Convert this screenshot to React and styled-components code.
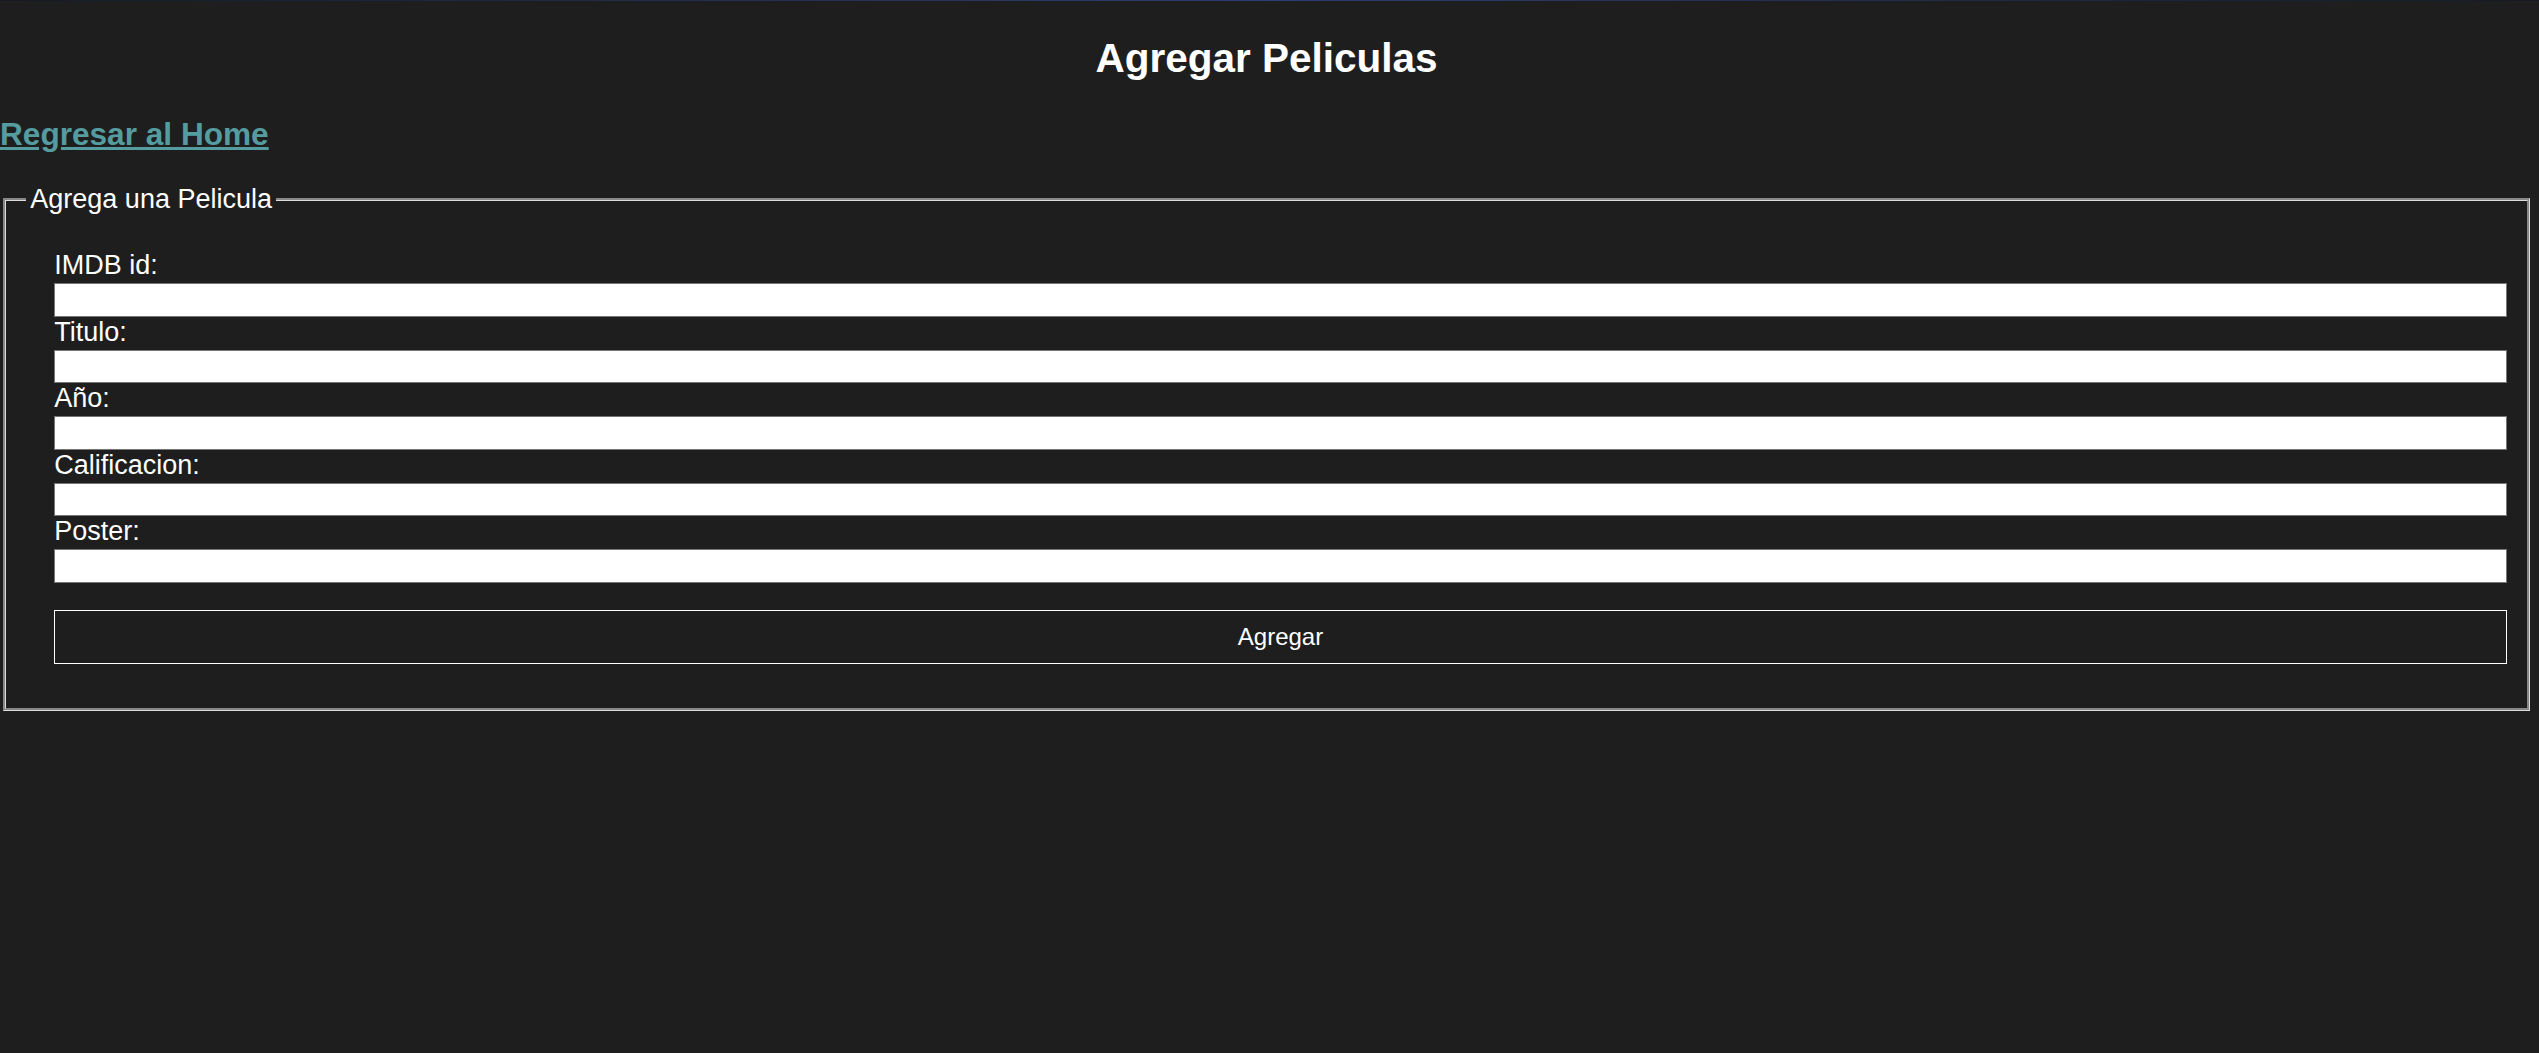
import React from 'react';
import styled, { createGlobalStyle } from 'styled-components';

const GlobalStyle = createGlobalStyle`
  html, body {
    margin: 0;
    padding: 0;
    background-color: #1e1e1e;
    font-family: "Liberation Sans", Arial, sans-serif;
    color: #fff;
  }
`;

const Page = styled.div`
  min-height: 100vh;
  padding-right: 6px;
  background-color: #1e1e1e;
`;

const TopLine = styled.div`
  height: 1px;
  margin-right: -6px;
  background: linear-gradient(90deg, #161a26 0%, #2c3d70 50%, #161a26 100%);
`;

const Title = styled.h2`
  margin: 34px 0 34.5px;
  font-size: 40.5px;
  line-height: 46px;
  font-weight: bold;
  text-align: center;
  color: #fff;
`;

const BackLink = styled.h3`
  margin: 0 0 32.5px;
  font-size: 31.6px;
  line-height: 36px;
  font-weight: bold;

  & > a {
    color: #559ca0;
    text-decoration: underline;
  }
`;

const FormBox = styled.fieldset`
  margin: 0 3.3px;
  padding: 9px 20px 16.7px;
  border: 3px groove #dcdcdc;
  min-width: 0;
`;

const Legend = styled.legend`
  padding: 0 4px;
  font-size: 27px;
  line-height: 30.7px;
  color: #fff;
`;

const Form = styled.form`
  padding: 26.5px 0 28px 28px;
  display: flex;
  flex-direction: column;
`;

const Label = styled.label`
  display: block;
  font-size: 27px;
  line-height: 31px;
  margin-bottom: 2px;
  color: #fff;
`;

const Input = styled.input`
  display: block;
  width: 100%;
  height: 33.5px;
  box-sizing: border-box;
  margin: 0;
  padding: 0 4px;
  border: 1.5px solid #767676;
  background-color: #fff;
  font-family: "Liberation Sans", Arial, sans-serif;
  font-size: 22px;
`;

const SubmitButton = styled.button`
  margin-top: 27px;
  width: 100%;
  height: 54px;
  box-sizing: border-box;
  border: 1.5px solid #fff;
  background-color: transparent;
  color: #fff;
  font-family: "Liberation Sans", Arial, sans-serif;
  font-size: 24px;
  cursor: pointer;
`;

const fields = [
  { id: 'imdbId', label: 'IMDB id:' },
  { id: 'titulo', label: 'Titulo:' },
  { id: 'anio', label: 'Año:' },
  { id: 'calificacion', label: 'Calificacion:' },
  { id: 'poster', label: 'Poster:' },
];

export default function App() {
  return (
    <>
      <GlobalStyle />
      <Page>
        <TopLine />
        <Title>Agregar Peliculas</Title>
        <BackLink>
          <a href="#">Regresar al Home</a>
        </BackLink>
        <FormBox>
          <Legend>Agrega una Pelicula</Legend>
          <Form onSubmit={(e) => e.preventDefault()}>
            {fields.map((f) => (
              <React.Fragment key={f.id}>
                <Label htmlFor={f.id}>{f.label}</Label>
                <Input id={f.id} type="text" />
              </React.Fragment>
            ))}
            <SubmitButton type="submit">Agregar</SubmitButton>
          </Form>
        </FormBox>
      </Page>
    </>
  );
}
